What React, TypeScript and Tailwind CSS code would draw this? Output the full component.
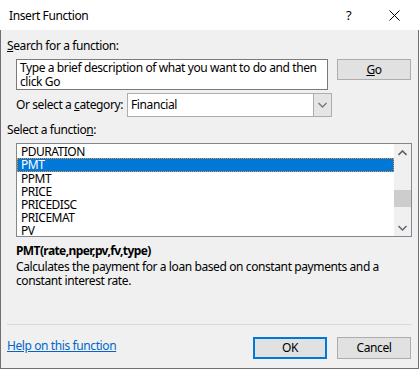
import React from "react";

const font = { fontFamily: '"Noto Sans", "Segoe UI", sans-serif' };

function ChevronUp() {
  return (
    <svg width="9" height="6" viewBox="0 0 9 6">
      <polyline points="0.5,5 4.5,1 8.5,5" fill="none" stroke="#606060" strokeWidth="1.6" />
    </svg>
  );
}
function ChevronDown({ color = "#606060" }: { color?: string }) {
  return (
    <svg width="9" height="6" viewBox="0 0 9 6">
      <polyline points="0.5,1 4.5,5 8.5,1" fill="none" stroke={color} strokeWidth="1.4" />
    </svg>
  );
}

const items = ["PDURATION", "PMT", "PPMT", "PRICE", "PRICEDISC", "PRICEMAT", "PV"];

export default function App() {
  return (
    <div className="w-[419px] h-[369px] text-[12px] tracking-[-0.4px] text-black overflow-hidden" style={font}>
      {/* Title bar */}
      <div className="h-[30px] bg-white flex items-center relative">
        <span className="ml-[9px] text-[12px] leading-[16px] mt-[2px]">Insert Function</span>
        <span className="absolute left-[346px] top-[7px] text-[13px] leading-[16px]">?</span>
        <svg className="absolute left-[389px] top-[10px]" width="11" height="11" viewBox="0 0 11 11">
          <line x1="0.5" y1="0.5" x2="10.5" y2="10.5" stroke="#000" strokeWidth="1" />
          <line x1="10.5" y1="0.5" x2="0.5" y2="10.5" stroke="#000" strokeWidth="1" />
        </svg>
      </div>
      {/* Body */}
      <div className="h-[339px] bg-[#f0f0f0] border-l border-r border-b border-[#707070] flex flex-col">
        <div className="ml-[6px] mt-[8px] leading-[16px]">
          <u>S</u>earch for a function:
        </div>
        <div className="flex mt-[5px] ml-[15px]">
          <div className="w-[312px] h-[31px] bg-white border border-[#7a7a7a] px-[3px] pt-[1px] leading-[14px]">
            Type a brief description of what you want to do and then click Go
          </div>
          <div className="ml-[9px] w-[74px] h-[21px] bg-[#e1e1e1] border border-[#adadad] flex items-center justify-center leading-[14px]">
            <span><u>G</u>o</span>
          </div>
        </div>
        <div className="flex items-center mt-[3px] ml-[15px]">
          <span className="leading-[16px]">Or select a <u>c</u>ategory:</span>
          <div className="ml-[4px] w-[205px] h-[24px] bg-white border border-[#adadad] flex">
            <span className="flex-1 pl-[3px] leading-[22px]">Financial</span>
            <div className="w-[18px] h-full bg-[#e5e5e5] border-l border-[#adadad] flex items-center justify-center">
              <ChevronDown color="#7a7a7a" />
            </div>
          </div>
        </div>
        <div className="ml-[6px] mt-[5px] leading-[16px]">
          Select a functio<u>n</u>:
        </div>
        <div className="ml-[15px] mt-[5px] w-[396px] h-[94px] bg-white border border-[#828790] flex">
          <div className="flex-1 flex flex-col pt-[1px] tracking-[-0.5px]">
            {items.map((it) =>
              it === "PMT" ? (
                <div
                  key={it}
                  className="h-[14px] bg-[#0078d7] text-white border border-dotted border-[#ff8c28] pl-[3px] leading-[12px]"
                >
                  {it}
                </div>
              ) : (
                <div key={it} className="h-[13px] pl-[4px] leading-[13px]">
                  {it}
                </div>
              )
            )}
          </div>
          <div className="w-[17px] bg-[#f0f0f0] flex flex-col items-center">
            <div className="h-[17px] flex items-center justify-center">
              <ChevronUp />
            </div>
            <div className="flex-1 w-full flex flex-col">
              <div className="h-[29px]" />
              <div className="h-[17px] w-full bg-[#cdcdcd]" />
            </div>
            <div className="h-[17px] flex items-center justify-center">
              <ChevronDown />
            </div>
          </div>
        </div>
        <div className="ml-[15px] mt-[6px] font-bold tracking-[-0.6px] leading-[16px]">PMT(rate,nper,pv,fv,type)</div>
        <div className="ml-[15px] mt-[1px] w-[385px] leading-[14px]">
          Calculates the payment for a loan based on constant payments and a constant interest rate.
        </div>
        <div className="flex-1" />
        <div className="mx-[6px] h-px bg-[#d8d8d8]" />
        <div className="flex items-center mt-[12px] mb-[9px] ml-[6px] mr-[7px]">
          <span className="text-[#0066cc] underline leading-[16px] mt-[-4px]">Help on this function</span>
          <div className="flex-1" />
          <div className="w-[74px] h-[22px] bg-[#e1e1e1] border-2 border-[#0078d7] flex items-center justify-center leading-[14px]">
            OK
          </div>
          <div className="ml-[10px] w-[74px] h-[22px] bg-[#e1e1e1] border border-[#adadad] flex items-center justify-center leading-[14px]">
            Cancel
          </div>
        </div>
      </div>
    </div>
  );
}
